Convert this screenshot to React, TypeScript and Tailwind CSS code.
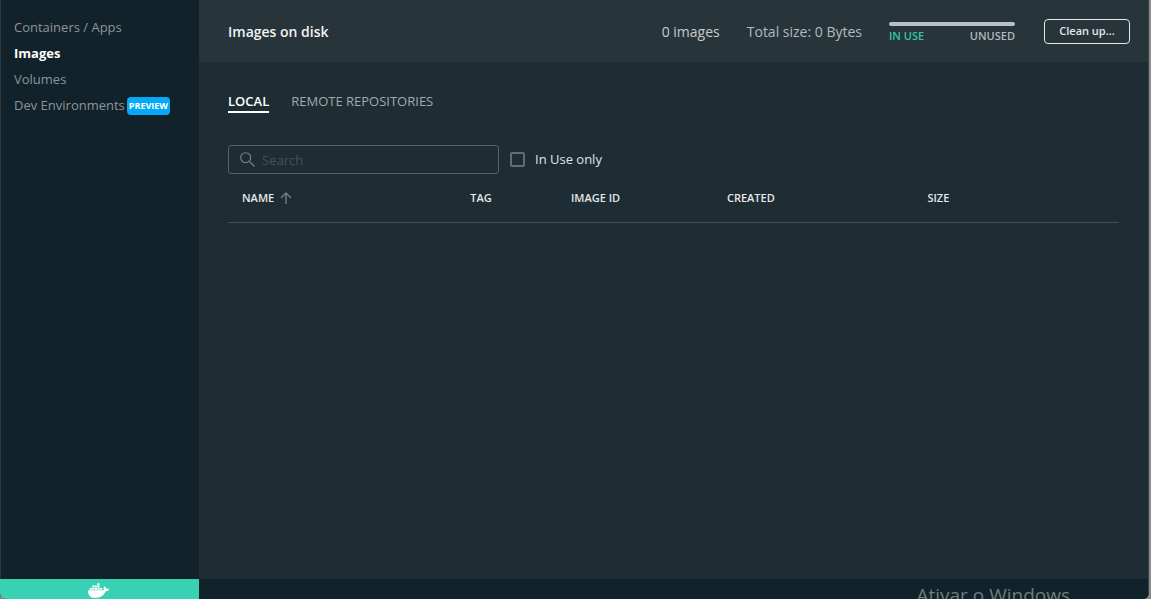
import { useState } from 'react';
import { FaDocker } from 'react-icons/fa';

const navItems = [
  { label: 'Containers / Apps' },
  { label: 'Images', active: true },
  { label: 'Volumes' },
  { label: 'Dev Environments', badge: 'PREVIEW' },
];

function Sidebar() {
  return (
    <nav className="flex-1 pl-[13px] pt-3.5 text-[13px] leading-[26px]">
      <ul>
        {navItems.map((item) => (
          <li key={item.label} className="flex items-center gap-0.5">
            <a href="#" className={item.active ? 'font-bold text-white' : 'text-[#8d9598]'}>
              {item.label}
            </a>
            {item.badge && (
              <span className="mt-0.5 rounded bg-[#04aaf8] px-0.5 text-[9px] leading-[18px] font-bold text-white">
                {item.badge}
              </span>
            )}
          </li>
        ))}
      </ul>
    </nav>
  );
}

function Header() {
  return (
    <header className="flex h-[62px] items-center bg-[#27343a] pr-[18px] pl-[29px]">
      <h1 className="flex-1 text-[14px] font-semibold text-[#f1f3f3]">Images on disk</h1>
      <span className="mr-[27px] text-[14px] font-medium text-[#c6cbcd]">0 images</span>
      <span className="mr-[27px] text-[14px] text-[#b4babd]">Total size: 0 Bytes</span>
      <div className="mr-[29px] w-[126px] pt-1.5">
        <div className="h-1 rounded-full bg-[#b7c0c7]" />
        <div className="flex justify-between text-[11px] leading-5 font-semibold">
          <span className="text-[#33c6a5]">IN USE</span>
          <span className="text-[#b1b8bd]">UNUSED</span>
        </div>
      </div>
      <button className="h-[25px] w-[86px] rounded border border-[#e4e7e8] text-[11px] font-semibold text-[#e4e7e8]">
        Clean up...
      </button>
    </header>
  );
}

function ImagesTable() {
  return (
    <table className="w-full table-fixed border-b border-[#484f50] text-left text-[11px] text-[#e5e8e9]">
      <colgroup>
        <col className="w-[27.2%]" />
        <col className="w-[11.3%]" />
        <col className="w-[17.5%]" />
        <col className="w-[22.5%]" />
        <col />
      </colgroup>
      <thead>
        <tr className="h-12 align-middle">
          <th className="pl-3.5 font-semibold">
            <button className="flex items-center gap-[6px]">
              NAME
              <svg className="size-3" viewBox="0 0 12 12" fill="none" stroke="#747d81" strokeWidth="1.4">
                <path d="M6 12V1M1 6l5-5 5 5" />
              </svg>
            </button>
          </th>
          <th className="font-semibold">TAG</th>
          <th className="font-semibold">IMAGE ID</th>
          <th className="font-semibold">CREATED</th>
          <th className="font-semibold">SIZE</th>
        </tr>
      </thead>
      <tbody />
    </table>
  );
}

export default function App() {
  const [query, setQuery] = useState('');
  const [inUseOnly, setInUseOnly] = useState(false);

  return (
    <div className="h-screen bg-[#8b8b8b] pr-0.5 font-['Open_Sans',sans-serif]">
      <div className="flex h-full overflow-hidden rounded-b-md bg-[#1e2c33]">
        <aside className="flex w-[199px] shrink-0 flex-col border-l border-[#2c393f] bg-[#11222a]">
          <Sidebar />
          <div className="-ml-px flex h-5 items-center justify-center overflow-hidden bg-[#39d1b3] pr-0.5 text-white">
            <FaDocker className="mt-[3px] size-[21px]" aria-label="Docker" />
          </div>
        </aside>
        <div className="flex min-w-0 flex-1 flex-col border-r border-[#354147]">
          <Header />
          <main className="flex-1 pt-[30px] pr-[29px] pl-[29px]">
            <div role="tablist" className="flex gap-[22px] text-[13px] leading-[19px]">
              <button role="tab" aria-selected="true" className="border-b-2 border-white font-semibold text-white">
                LOCAL
              </button>
              <button
                role="tab"
                aria-selected="false"
                className="border-b-2 border-transparent font-medium text-[#a3aaad]"
              >
                REMOTE REPOSITORIES
              </button>
            </div>
            <div className="mt-8 flex items-center">
              <label className="flex h-[29px] w-[271px] items-center gap-[7px] rounded-[3px] border border-[#566065] pl-[11px]">
                <svg
                  className="size-[15px] shrink-0"
                  viewBox="0 0 15 15"
                  fill="none"
                  stroke="#7b8589"
                  strokeWidth="1.1"
                >
                  <circle cx="5.7" cy="5.7" r="5" />
                  <path d="M9.3 9.3L14.5 14.5" />
                </svg>
                <input
                  type="text"
                  aria-label="Search"
                  placeholder="Search"
                  value={query}
                  onChange={(event) => setQuery(event.target.value)}
                  className="min-w-0 flex-1 bg-transparent pt-0.5 text-[13px] text-white outline-none placeholder:text-[#465156]"
                />
              </label>
              <label className="ml-[11px] flex items-center gap-[10px] text-[13px] text-[#e0e3e4]">
                <input
                  type="checkbox"
                  checked={inUseOnly}
                  onChange={(event) => setInUseOnly(event.target.checked)}
                  className="size-[15px] appearance-none rounded-[2px] border-2 border-[#626c71] checked:bg-[#04aaf8]"
                />
                In Use only
              </label>
            </div>
            <ImagesTable />
          </main>
          <footer className="flex h-5 justify-end overflow-hidden bg-[#11222a] pr-[78px]">
            <span className="pt-1 text-[19px] leading-6 text-[#717b80]">Ativar o Windows</span>
          </footer>
        </div>
      </div>
    </div>
  );
}
